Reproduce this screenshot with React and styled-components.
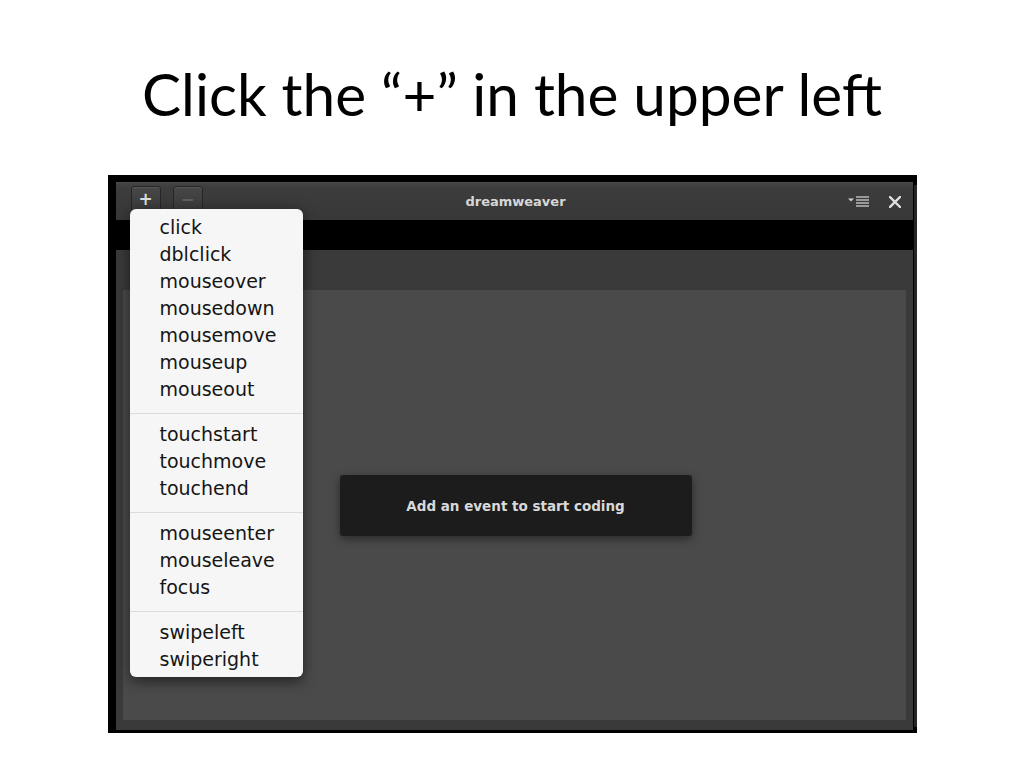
import React from 'react'
import styled, { createGlobalStyle } from 'styled-components'

const GlobalStyle = createGlobalStyle`
    html, body {
        margin: 0;
        padding: 0;
        background: #ffffff;
    }
    body {
        width: 1024px;
        height: 768px;
        overflow: hidden;
    }
`

const Slide = styled.div`
    width: 1024px;
    height: 768px;
    display: flex;
    flex-direction: column;
    align-items: center;
`

const Title = styled.h1`
    margin: 0;
    padding-top: 61px;
    height: 175px;
    box-sizing: border-box;
    font-family: Lato, "Open Sans", sans-serif;
    font-weight: 400;
    font-size: 58.5px;
    line-height: 64px;
    color: #000;
`

const Shot = styled.div`
    position: relative;
    width: 809px;
    height: 558px;
    box-sizing: border-box;
    background: #000;
    padding: 7px 4px 3px 8px;
    display: flex;
`

const EdgeStrip = styled.div`
    position: absolute;
    right: 0;
    top: 10px;
    bottom: 6px;
    width: 3px;
    background: #262626;
`

const Window = styled.div`
    flex: 1;
    display: flex;
    flex-direction: column;
`

const TitleBar = styled.div`
    height: 38px;
    display: grid;
    grid-template-columns: 1fr auto 1fr;
    align-items: center;
    padding: 0 12px 0 15px;
    background: linear-gradient(#444 0%, #3c3c3c 15%, #383838 100%);
    border-top: 1px solid #4c4c4c;
    box-sizing: border-box;
`

const LeftTools = styled.div`
    display: flex;
    gap: 12px;
    align-self: start;
    padding-top: 3px;
`

const ToolButton = styled.div`
    width: 30px;
    height: 26px;
    box-sizing: border-box;
    border: 1px solid #262626;
    border-radius: 3px;
    background: linear-gradient(#474747, #3a3a3a);
    box-shadow: inset 0 1px 0 #555;
    display: flex;
    align-items: center;
    justify-content: center;
    color: ${({dim}) => (dim ? '#5e5e5e' : '#dcdcdc')};
    font-family: "DejaVu Sans", sans-serif;
    font-weight: 700;
    font-size: 17px;
    line-height: 1;
`

const WinTitle = styled.div`
    font-family: "DejaVu Sans", sans-serif;
    font-weight: 700;
    font-size: 13px;
    color: #d6d6d6;
`

const RightTools = styled.div`
    display: flex;
    justify-content: flex-end;
    align-items: center;
    gap: 19px;
`

const BlackBand = styled.div`
    height: 30px;
    background: #000;
`

const Body = styled.div`
    flex: 1;
    display: flex;
    background: #3a3a3a;
    padding: 40px 7px 10px 7px;
`

const Canvas = styled.div`
    flex: 1;
    display: flex;
    align-items: center;
    justify-content: center;
    background: #4a4a4a;
    padding-left: 3px;
`

const Hint = styled.div`
    width: 352px;
    height: 61px;
    margin-top: 1px;
    border-radius: 3px;
    background: #1c1c1c;
    box-shadow: 0 3px 10px rgba(0, 0, 0, 0.45);
    display: flex;
    align-items: center;
    justify-content: center;
    font-family: "DejaVu Sans", sans-serif;
    font-weight: 700;
    font-size: 13.5px;
    color: #d9d9d9;
`

const Menu = styled.ul`
    position: absolute;
    left: 22px;
    top: 34px;
    width: 173px;
    margin: 0;
    padding: 5px 0 4px;
    list-style: none;
    background: #f6f6f6;
    border-radius: 6px;
    box-shadow: 0 4px 14px rgba(0, 0, 0, 0.55);
`

const MenuItem = styled.li`
    height: 27px;
    line-height: 27px;
    padding-left: 30px;
    font-family: "DejaVu Sans", sans-serif;
    font-size: 19px;
    color: #151515;
`

const Divider = styled.li`
    height: 1px;
    margin: 10px 0 7px;
    background: #dcdcdc;
`

const groups = [
    ['click', 'dblclick', 'mouseover', 'mousedown', 'mousemove', 'mouseup', 'mouseout'],
    ['touchstart', 'touchmove', 'touchend'],
    ['mouseenter', 'mouseleave', 'focus'],
    ['swipeleft', 'swiperight'],
]

function PanelMenuIcon() {
    return (
        <svg width="22" height="11" viewBox="0 0 22 11">
            <path d="M0 2.5 H6 L3 5.5 Z" fill="#cfcfcf" />
            <g stroke="#cfcfcf" strokeWidth="1.3">
                <line x1="8" y1="1" x2="21" y2="1" />
                <line x1="8" y1="4" x2="21" y2="4" />
                <line x1="8" y1="7" x2="21" y2="7" />
                <line x1="8" y1="10" x2="21" y2="10" />
            </g>
        </svg>
    )
}

function CloseIcon() {
    return (
        <svg width="12" height="12" viewBox="0 0 12 12">
            <path d="M1 1 L11 11 M11 1 L1 11" stroke="#dedede" strokeWidth="2.4" strokeLinecap="square" />
        </svg>
    )
}

export default function App() {
    return (
        <Slide>
            <GlobalStyle />
            <Title>Click the “+” in the upper left</Title>
            <Shot>
                <Window>
                    <TitleBar>
                        <LeftTools>
                            <ToolButton>+</ToolButton>
                            <ToolButton dim>−</ToolButton>
                        </LeftTools>
                        <WinTitle>dreamweaver</WinTitle>
                        <RightTools>
                            <PanelMenuIcon />
                            <CloseIcon />
                        </RightTools>
                    </TitleBar>
                    <BlackBand />
                    <Body>
                        <Canvas>
                            <Hint>Add an event to start coding</Hint>
                        </Canvas>
                    </Body>
                </Window>
                <EdgeStrip />
                <Menu>
                    {groups.map((group, i) => (
                        <React.Fragment key={i}>
                            {i > 0 && <Divider />}
                            {group.map((name) => (
                                <MenuItem key={name}>{name}</MenuItem>
                            ))}
                        </React.Fragment>
                    ))}
                </Menu>
            </Shot>
        </Slide>
    )
}
